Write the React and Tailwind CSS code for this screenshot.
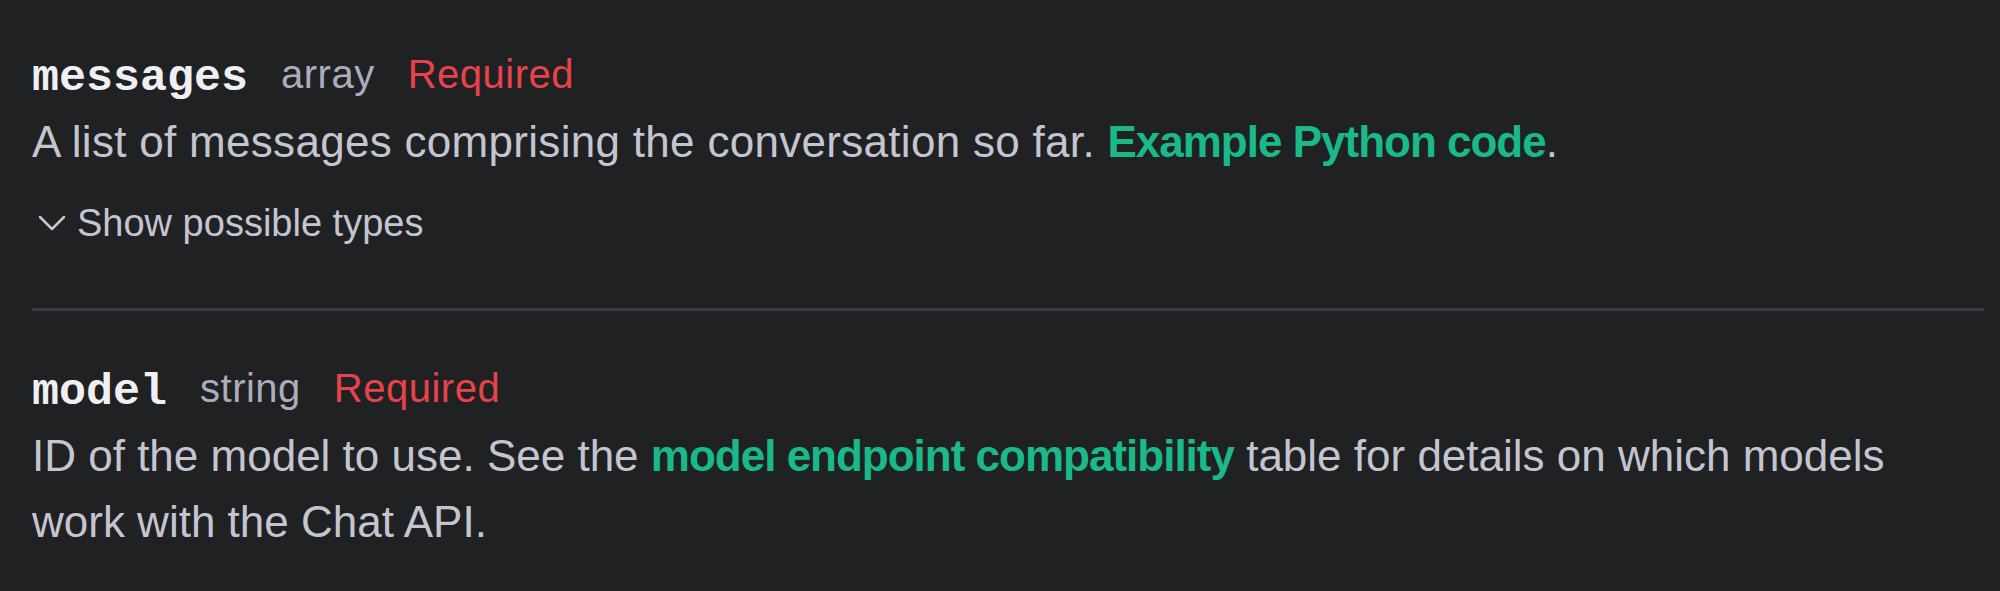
import React from 'react';

const sans = "font-['Liberation_Sans',Arial,sans-serif]";
const mono = "font-['Liberation_Mono','Courier_New',monospace]";

function ParamHeader({ name, type }) {
  return (
    <div className="flex items-center gap-[33px]">
      <span className={`${mono} text-[45px] leading-[48px] font-bold text-[#f0f0f4]`}>{name}</span>
      <span className={`${sans} text-[40px] leading-[48px] tracking-[0.5px] pb-[10px] text-[#acacbe]`}>{type}</span>
      <span className={`${sans} text-[40px] leading-[48px] tracking-[0.5px] pb-[10px] text-[#e8434b]`}>Required</span>
    </div>
  );
}

function Link({ children }) {
  return <span className="font-bold tracking-[-1px] text-[#19b98a]">{children}</span>;
}

export default function App() {
  return (
    <div className={`${sans} w-full h-[591px] bg-[#202123] pl-[32px] pr-[16px] pt-[50px] overflow-hidden`}>
      {/* messages */}
      <ParamHeader name="messages" type="array" />
      <p className="mt-[1px] text-[44px] leading-[66px] tracking-[0.3px] text-[#c5c5d2]">
        A list of messages comprising the conversation so far. <Link>Example Python code</Link>.
      </p>
      <div className="mt-[24px] flex items-center gap-[11px] text-[38px] leading-[48px] text-[#c5c5d2]">
        <svg className="ml-[6px]" width="28" height="16" viewBox="0 0 28 16" fill="none">
          <path d="M2 2L14 14L26 2" stroke="#c5c5d2" strokeWidth="2.5" strokeLinecap="round" strokeLinejoin="round" />
        </svg>
        <span>Show possible types</span>
      </div>

      <div className="mt-[61px] border-t-[3px] border-[#3c3d48]" />

      {/* model */}
      <div className="mt-[53px]">
        <ParamHeader name="model" type="string" />
      </div>
      <p className="mt-[1px] text-[44px] leading-[66px] text-[#c5c5d2]">
        ID of the model to use. See the <Link>model endpoint compatibility</Link> table for details on which models work with the Chat API.
      </p>
    </div>
  );
}
